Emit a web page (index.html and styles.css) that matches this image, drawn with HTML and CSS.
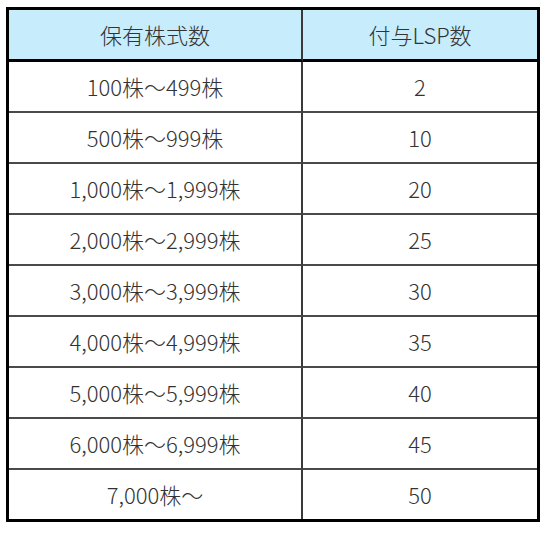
FILE: index.html
```html
<!DOCTYPE html>
<html lang="ja">
<head>
<meta charset="utf-8">
<title>付与LSP数</title>
<link rel="stylesheet" href="styles.css">
</head>
<body>
<div class="table">
  <div class="cell head c1">保有株式数</div>
  <div class="cell head c2">付与LSP数</div>
  <div class="cell c1">100株～499株</div>
  <div class="cell c2">2</div>
  <div class="cell c1">500株～999株</div>
  <div class="cell c2">10</div>
  <div class="cell c1">1,000株～1,999株</div>
  <div class="cell c2">20</div>
  <div class="cell c1">2,000株～2,999株</div>
  <div class="cell c2">25</div>
  <div class="cell c1">3,000株～3,999株</div>
  <div class="cell c2">30</div>
  <div class="cell c1">4,000株～4,999株</div>
  <div class="cell c2">35</div>
  <div class="cell c1">5,000株～5,999株</div>
  <div class="cell c2">40</div>
  <div class="cell c1">6,000株～6,999株</div>
  <div class="cell c2">45</div>
  <div class="cell c1 last">7,000株～</div>
  <div class="cell c2 last">50</div>
</div>
</body>
</html>
```
FILE: styles.css
```css
html, body {
  margin: 0;
  background: #ffffff;
}
body {
  padding: 7px 0 0 6px;
  font-family: "Noto Sans CJK JP", "Noto Sans", sans-serif;
  font-weight: 300;
  color: #333333;
}
.table {
  width: 534px;
  box-sizing: border-box;
  border: 3px solid #000;
  display: grid;
  grid-template-columns: 294px 1fr;
}
.cell {
  height: 49px;
  display: flex;
  align-items: center;
  justify-content: center;
  font-size: 22px;
  line-height: 1;
  padding-bottom: 1px;
  box-sizing: border-box;
  border-bottom: 2px solid #4a4a4a;
}
.c1 {
  border-right: 2px solid #3a3a3a;
}
.head {
  background: #c7ecfb;
  border-bottom: 3px solid #000;
}
.cell.last {
  height: 49px;
  border-bottom: none;
}
.cell:not(.last):not(.head) {
  height: 51px;
}
.cell.head {
  height: 52px;
}
```
